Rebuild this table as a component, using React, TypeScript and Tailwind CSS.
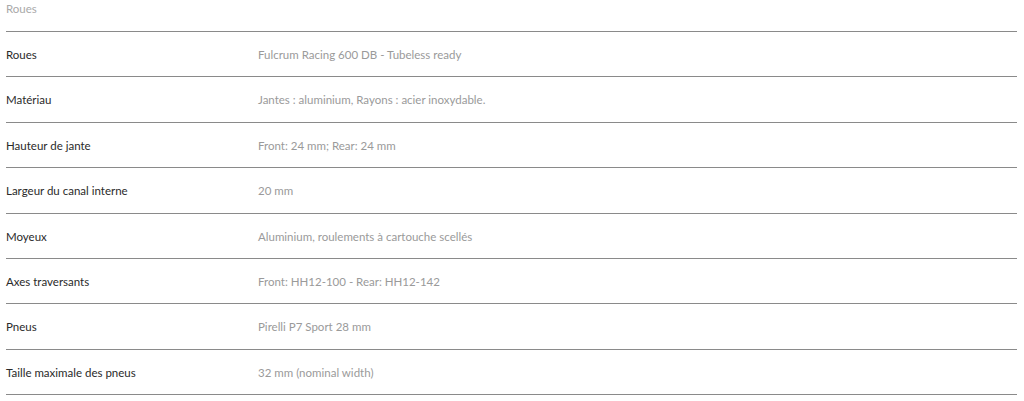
import React from "react";

const rows: [string, string][] = [
  ["Roues", "Fulcrum Racing 600 DB - Tubeless ready"],
  ["Matériau", "Jantes : aluminium, Rayons : acier inoxydable."],
  ["Hauteur de jante", "Front: 24 mm; Rear: 24 mm"],
  ["Largeur du canal interne", "20 mm"],
  ["Moyeux", "Aluminium, roulements à cartouche scellés"],
  ["Axes traversants", "Front: HH12-100 - Rear: HH12-142"],
  ["Pneus", "Pirelli P7 Sport 28 mm"],
  ["Taille maximale des pneus", "32 mm (nominal width)"],
];

export default function App() {
  return (
    <div className="w-[1024px] h-[401px] bg-white pl-[6px] pr-[7px] text-[11.5px] font-['Lato',sans-serif]">
      <div className="h-[32px] pt-[2px] text-[#a9a9a9] border-b border-[#8a8a8a] leading-[14px]">Roues</div>
      {rows.map(([k, v]) => (
        <div key={k} className="h-[45.375px] pt-[1px] flex items-center border-b border-[#8a8a8a]">
          <div className="w-[252px] text-[#2a2a2a]">{k}</div>
          <div className="text-[#9a9a9a]">{v}</div>
        </div>
      ))}
    </div>
  );
}
